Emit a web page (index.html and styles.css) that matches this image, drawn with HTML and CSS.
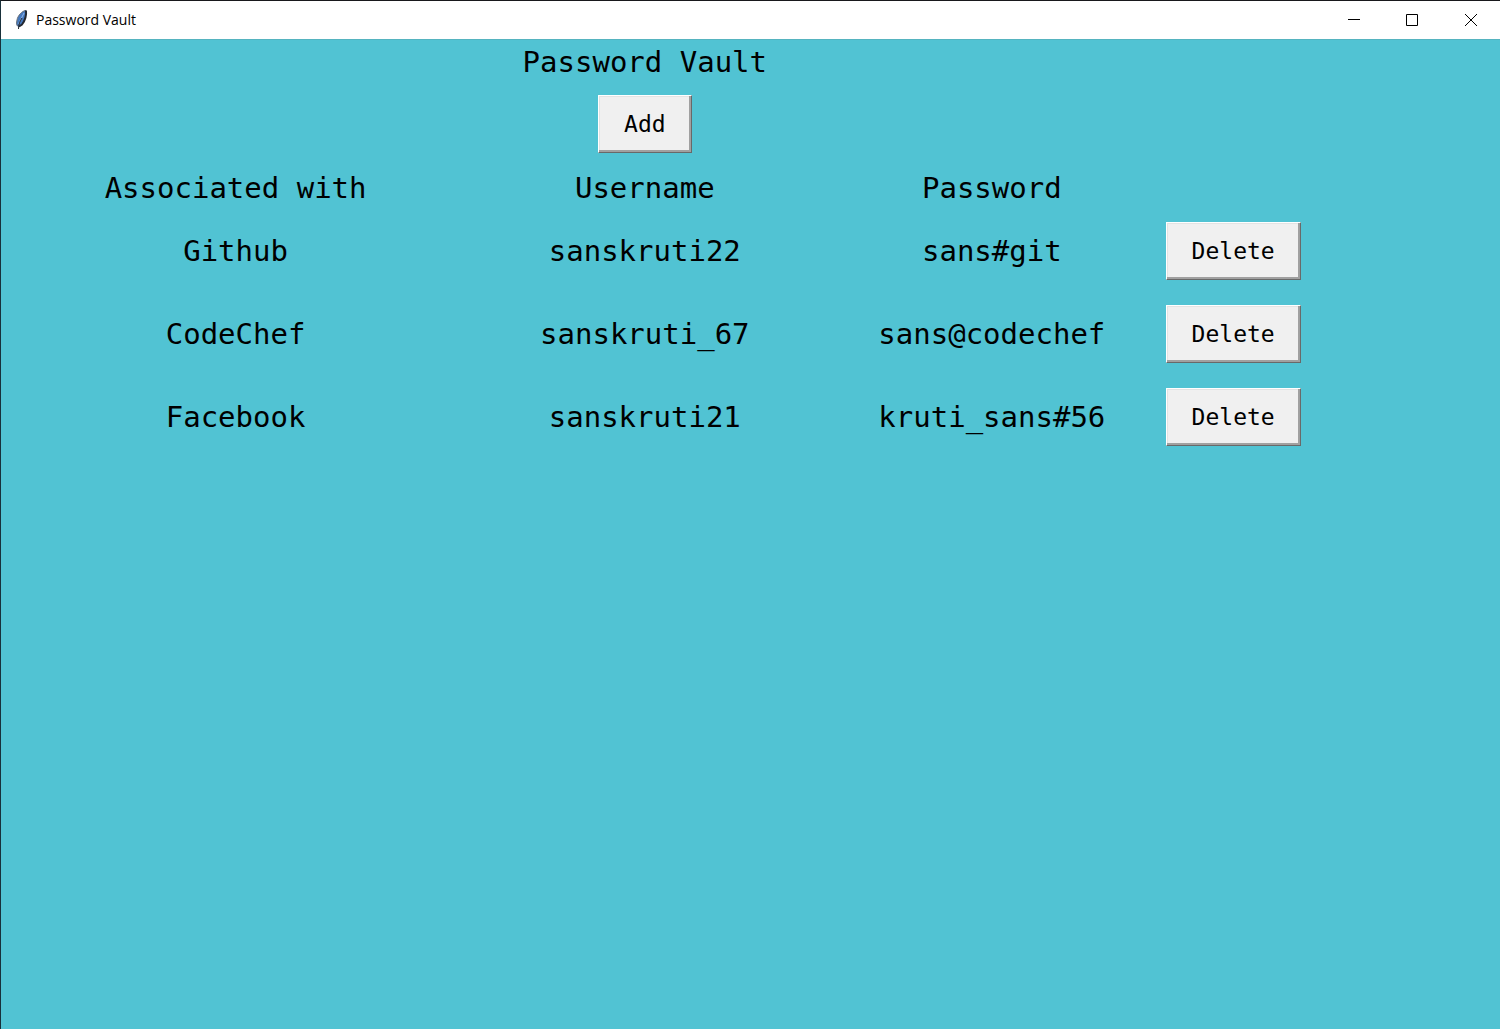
FILE: index.html
```html
<!DOCTYPE html>
<html lang="en">
<head>
<meta charset="utf-8">
<meta name="viewport" content="width=device-width, initial-scale=1">
<title>Password Vault</title>
<link rel="stylesheet" href="styles.css">
</head>
<body>
<div class="window">
  <header class="titlebar">
    <svg class="feather" viewBox="0 0 14 22" aria-hidden="true">
      <path d="M12 1C8 2 3.500 6.500 3 11L2 14L3 17L5 18L8 16C11.500 11.500 13 6 12 1Z" fill="#4478bd"/>
      <path d="M11.500 1.500C8 2 3.500 7 3 11L2.500 14.500L3.500 17" fill="none" stroke="#6f7379" stroke-width="1"/>
      <path d="M10 4C8 8 6 12 4.500 15" fill="none" stroke="#8fb4e8" stroke-width="1"/>
      <path d="M12 1.500C12.500 6 11 11.500 8 15.500L5 17.500" fill="none" stroke="#23272f" stroke-width="2"/>
      <path d="M8 9C6 12 4.500 15 4.500 20" fill="none" stroke="#23272f" stroke-width="1"/>
    </svg>
    <span class="caption">Password Vault</span>
    <button class="control" type="button" aria-label="Minimize"><svg class="glyph" viewBox="0 0 12 12"><path d="M0 5.500H12"/></svg></button>
    <button class="control" type="button" aria-label="Maximize"><svg class="glyph" viewBox="0 0 12 12"><path d="M.5 .5H11.500V11.500H.5Z"/></svg></button>
    <button class="control control-close" type="button" aria-label="Close"><svg class="glyph" viewBox="0 0 12 12"><path d="M0 0L12 12M12 0L0 12"/></svg></button>
  </header>
  <main class="vault">
    <div class="intro">
      <h1 class="heading">Password Vault</h1>
      <button class="button" type="button">Add</button>
    </div>
    <table class="entries">
      <colgroup>
        <col class="col-site"><col class="col-user"><col class="col-pass"><col class="col-action"><col>
      </colgroup>
      <thead>
        <tr><th scope="col">Associated with</th><th scope="col">Username</th><th scope="col">Password</th><td></td><td></td></tr>
      </thead>
      <tbody>
        <tr><td>Github</td><td>sanskruti22</td><td>sans#git</td><td><button class="button" type="button">Delete</button></td><td></td></tr>
        <tr><td>CodeChef</td><td>sanskruti_67</td><td>sans@codechef</td><td><button class="button" type="button">Delete</button></td><td></td></tr>
        <tr><td>Facebook</td><td>sanskruti21</td><td>kruti_sans#56</td><td><button class="button" type="button">Delete</button></td><td></td></tr>
      </tbody>
    </table>
  </main>
</div>
</body>
</html>
```
FILE: styles.css
```css
* {
  box-sizing: border-box;
}

body {
  margin: 0;
}

.window {
  display: flex;
  flex-direction: column;
  min-height: 100vh;
  border-top: 1px solid #18181c;
  border-left: 1px solid #18303a;
  background: #51c3d3;
  color: #000;
}

.titlebar {
  display: flex;
  align-items: center;
  height: 39px;
  padding-left: 13px;
  background: #fff;
  border-bottom: 1px solid #55b4c0;
  font: 14px/20px "Open Sans", "Noto Sans", sans-serif;
}

.feather {
  width: 14px;
  height: 22px;
  margin-right: 8px;
}

.caption {
  flex: 1;
}

.control {
  display: flex;
  align-items: center;
  justify-content: center;
  width: 58px;
  height: 38px;
  padding: 0;
  border: 0;
  background: none;
}

.control-close {
  width: 59px;
}

.glyph {
  width: 12px;
  height: 12px;
  fill: none;
  stroke: #000;
  stroke-width: 1;
}

.vault {
  flex: 1;
  font: 29px/42px "DejaVu Sans Mono", monospace;
}

.intro {
  display: flex;
  flex-direction: column;
  align-items: center;
  width: 85.9%;
  padding-bottom: 14px;
}

.heading {
  margin: 0 0 11px;
  font: inherit;
  line-height: 44px;
}

.button {
  display: block;
  margin: 0 auto;
  height: 58px;
  padding: 0 25px;
  border: 1px solid;
  border-color: #fff #696969 #696969 #fff;
  background: #f0f0f0;
  box-shadow: inset -2px -2px #a0a0a0, inset 1px 1px #e3e3e3;
  color: #000;
  font: 23px/30px "DejaVu Sans Mono", monospace;
}

.entries {
  width: 100%;
  table-layout: fixed;
  border-collapse: collapse;
}

.entries th,
.entries td {
  height: 42px;
  padding: 0;
  font-weight: 400;
  text-align: center;
  vertical-align: middle;
  white-space: nowrap;
}

.entries tbody td {
  height: 83px;
}

.col-site {
  width: 31.3%;
}

.col-user {
  width: 23.3%;
}

.col-pass {
  width: 23%;
}

.col-action {
  width: 9.2%;
}
```
